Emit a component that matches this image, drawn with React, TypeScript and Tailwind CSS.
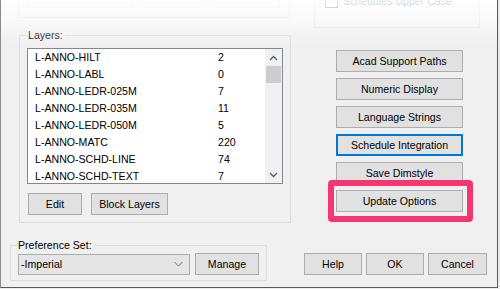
import type { ReactNode } from "react";

const layers = [
    { name: "L-ANNO-HILT", count: "2" },
    { name: "L-ANNO-LABL", count: "0" },
    { name: "L-ANNO-LEDR-025M", count: "7" },
    { name: "L-ANNO-LEDR-035M", count: "11" },
    { name: "L-ANNO-LEDR-050M", count: "5" },
    { name: "L-ANNO-MATC", count: "220" },
    { name: "L-ANNO-SCHD-LINE", count: "74" },
    { name: "L-ANNO-SCHD-TEXT", count: "7" },
];

const sideButtons = [
    "Acad Support Paths",
    "Numeric Display",
    "Language Strings",
    "Schedule Integration",
    "Save Dimstyle",
    "Update Options",
];

function Button({ children, className = "", focused = false }: { children: ReactNode; className?: string; focused?: boolean }) {
    return (
        <div
            className={`flex h-[22px] items-center justify-center bg-[#e1e1e1] ${focused ? "border-2 border-[#0078d7]" : "border border-[#adadad]"} ${className}`}
        >
            {children}
        </div>
    );
}

function Chevron({ up }: { up?: boolean }) {
    return (
        <svg width="9" height="6" viewBox="0 0 9 6">
            <polyline
                points={up ? "1,5 4.5,1.5 8,5" : "1,1 4.5,4.5 8,1"}
                fill="none"
                stroke="#606060"
                strokeWidth="1.4"
            />
        </svg>
    );
}

export default function App() {
    return (
        <div className="w-[500px] h-[289px] bg-[#ececec] text-black text-[10.6px] leading-[13px] font-['Liberation_Sans',Arial,sans-serif]">
            <div className="relative flex flex-col w-[498px] h-[288px] bg-[#f0f0f0] border-l border-r border-b border-l-[#8c8c8c] border-r-[#5a5a5a] border-b-[#5a5a5a] overflow-hidden">
                {/* Faded top section (scrolled off) */}
                <div className="flex h-[29px] items-start">
                    <div className="ml-[17px] w-[272px] h-[18px] border-x border-b border-[#dcdcdc] flex pl-[9px]">
                        <div className="w-[105px] h-[8px] border-x border-b border-[#dcdcdc]" />
                        <div className="ml-[4px] w-[70px] h-[8px] border-x border-b border-[#dcdcdc]" />
                        <div className="ml-[3px] w-[70px] h-[8px] border-x border-b border-[#dcdcdc]" />
                    </div>
                    <div className="ml-[24px] w-[166px] h-[28px] border-x border-b border-[#dcdcdc] pl-[10px]">
                        <div className="flex items-center gap-[5px] mt-[-5px]">
                            <div className="w-[13px] h-[13px] border border-[#333] bg-white" />
                            <span>Schedules Upper Case</span>
                        </div>
                    </div>
                </div>

                {/* Layers + side buttons */}
                <div className="flex">
                    <fieldset className="ml-[18px] w-[271px] h-[194px] border border-[#dcdcdc] px-[7px]">
                        <legend className="pl-[1px] pr-[2px]">Layers:</legend>
                        <div className="mt-[6px] w-[256px] h-[136px] border border-[#828790] bg-white flex">
                            <div className="flex-1 overflow-hidden">
                                {layers.map((layer) => (
                                    <div key={layer.name} className="flex h-[17px] items-center pl-[7px]">
                                        <span className="w-[183px]">{layer.name}</span>
                                        <span>{layer.count}</span>
                                    </div>
                                ))}
                            </div>
                            <div className="w-[17px] bg-[#f0f0f0] flex flex-col items-center">
                                <div className="h-[17px] flex items-center justify-center">
                                    <Chevron up />
                                </div>
                                <div className="w-[15px] h-[17px] bg-[#cdcdcd]" />
                                <div className="flex-1" />
                                <div className="h-[17px] flex items-center justify-center">
                                    <Chevron />
                                </div>
                            </div>
                        </div>
                        <div className="flex mt-[9px] ml-[1px] gap-[9px]">
                            <Button className="w-[54px]">Edit</Button>
                            <Button className="w-[77px]">Block Layers</Button>
                        </div>
                    </fieldset>

                    <div className="ml-[45px] mt-[21px] flex flex-col gap-[6px]">
                        {sideButtons.map((label) => (
                            <div key={label} className="relative">
                                <Button className="w-[127px]" focused={label === "Schedule Integration"}>
                                    {label}
                                </Button>
                                {label === "Update Options" && (
                                    <div className="absolute -left-[8px] -right-[10px] -top-[10px] -bottom-[10px] border-[6px] border-[#f5366f] rounded-[4px]" />
                                )}
                            </div>
                        ))}
                    </div>
                </div>

                {/* Preference set + dialog buttons */}
                <div className="flex mt-[16px]">
                    <fieldset className="ml-[9px] w-[257px] h-[42px] border border-[#dcdcdc] px-[7px]">
                        <legend className="pr-[2px]">Preference Set:</legend>
                        <div className="flex items-center mt-[1px]">
                            <div className="w-[172px] h-[21px] border border-[#adadad] bg-[#e5e5e5] flex items-center pl-[2px] pr-[6px]">
                                <span className="flex-1">-Imperial</span>
                                <svg width="9" height="6" viewBox="0 0 9 6">
                                    <polyline points="0.5,1 4.5,5 8.5,1" fill="none" stroke="#707070" strokeWidth="1" />
                                </svg>
                            </div>
                            <Button className="ml-[5px] w-[64px]">Manage</Button>
                        </div>
                    </fieldset>
                    <div className="ml-[37px] mt-[14px] flex gap-[4px]">
                        <Button className="w-[58px]">Help</Button>
                        <Button className="w-[58px]">OK</Button>
                        <Button className="w-[59px]">Cancel</Button>
                    </div>
                </div>

                {/* White fade over the clipped top */}
                <div className="pointer-events-none absolute left-0 right-0 top-0 h-[44px] bg-linear-to-b from-white/90 via-white/60 to-transparent" />
            </div>
        </div>
    );
}
